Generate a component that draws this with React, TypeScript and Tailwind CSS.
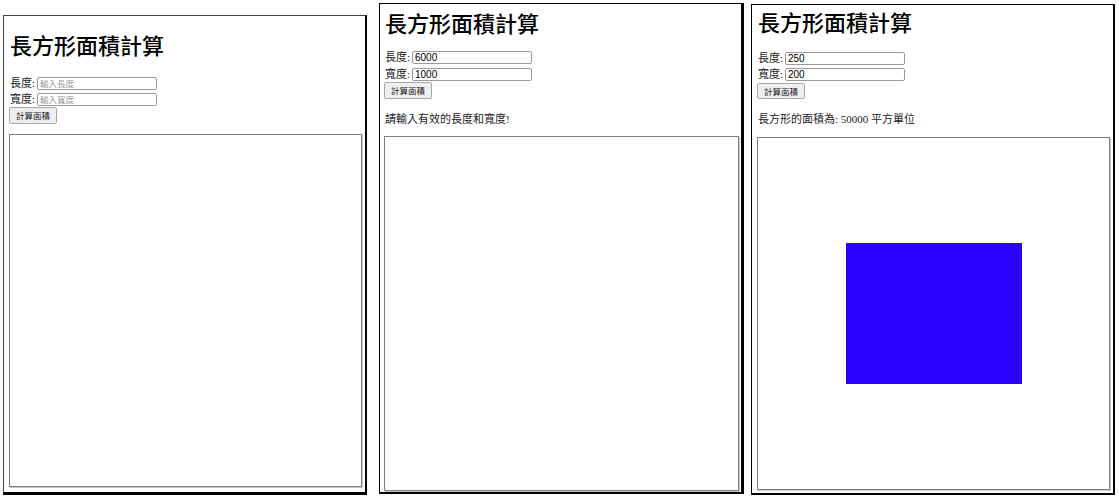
import React from 'react'

const CJK = { fontFamily: '"Noto Sans CJK TC", "Noto Sans CJK JP", sans-serif' }
const BODY = { fontFamily: '"Liberation Serif", "Noto Sans CJK TC", serif' }
const INPUT = { fontFamily: '"Liberation Sans", "Noto Sans CJK TC", sans-serif' }

type Field = { label: string; value?: string; placeholder: string }

function Row({ f, mt }: { f: Field; mt: string }) {
    return (
        <div className={`flex items-center h-[13px] ${mt}`}>
            <span className="w-[28px] pl-[1px] text-[11px] leading-[13px] text-[#222]" style={BODY}>
                {f.label}
            </span>
            <div
                className="w-[120px] h-[13px] border border-[#9a9a9a] rounded-[2px] bg-white flex items-center px-[2px] text-[10px] leading-none text-black"
                style={INPUT}
            >
                {f.value ? f.value : <span className="text-[8.5px] text-[#9a9a9a]" style={CJK}>{f.placeholder}</span>}
            </div>
        </div>
    )
}

function Btn({ mt, h }: { mt: string; h: string }) {
    return (
        <div
            className={`self-start ${mt} ${h} flex items-center px-[6px] border border-[#a8a8a8] rounded-[2px] bg-[#efefef] text-[8.5px] text-[#222]`}
            style={CJK}
        >
            計算面積
        </div>
    )
}

export default function App() {
    return (
        <div className="w-[1119px] h-[499px] bg-white overflow-hidden flex items-start pl-[3px]">
            {/* 畫面 1: 初始狀態 */}
            <div className="mt-[15px] w-[364px] flex flex-col pl-[5px] pr-[3px] pb-[5px] border-t border-l border-[#444] border-r-2 border-r-black border-b-[3px] border-b-black">
                <h1 className="mt-[17px] ml-[1px] text-[22px] leading-[22px] font-medium text-black" style={CJK}>
                    長方形面積計算
                </h1>
                <Row f={{ label: '長度:', placeholder: '輸入長度' }} mt="mt-[22px]" />
                <Row f={{ label: '寬度:', placeholder: '輸入寬度' }} mt="mt-[3px]" />
                <Btn mt="mt-[1px]" h="h-[17px]" />
                <div className="mt-[10px] w-[353px] h-[353px] border border-[#808080] shadow-[1px_1px_0_#c8c8c8]" />
            </div>

            {/* 畫面 2: 錯誤訊息 */}
            <div className="ml-[12px] mt-[3px] w-[365px] flex flex-col pl-[4px] pr-[2px] pb-[1px] border-t border-l border-black border-r-[3px] border-r-black border-b-2 border-b-black">
                <h1 className="mt-[7px] ml-[1px] text-[22px] leading-[22px] font-medium text-black" style={CJK}>
                    長方形面積計算
                </h1>
                <Row f={{ label: '長度:', value: '6000', placeholder: '' }} mt="mt-[18px]" />
                <Row f={{ label: '寬度:', value: '1000', placeholder: '' }} mt="mt-[4px]" />
                <Btn mt="mt-[1px]" h="h-[17px]" />
                <p className="mt-[14px] ml-[1px] text-[11px] leading-[13px] text-[#222]" style={BODY}>
                    請輸入有效的長度和寬度!
                </p>
                <div className="mt-[10px] w-[355px] h-[355px] border border-[#808080] shadow-[1px_1px_0_#c8c8c8]" />
            </div>

            {/* 畫面 3: 計算結果 */}
            <div className="ml-[7px] mt-[4px] w-[364px] flex flex-col pl-[5px] pr-[3px] pb-[3px] border-t border-l border-black border-r-2 border-r-black border-b-2 border-b-black">
                <h1 className="mt-[5px] ml-[1px] text-[22px] leading-[22px] font-medium text-black" style={CJK}>
                    長方形面積計算
                </h1>
                <Row f={{ label: '長度:', value: '250', placeholder: '' }} mt="mt-[20px]" />
                <Row f={{ label: '寬度:', value: '200', placeholder: '' }} mt="mt-[3px]" />
                <Btn mt="mt-[2px]" h="h-[16px]" />
                <p className="mt-[14px] ml-[1px] text-[11px] leading-[13px] text-[#222]" style={BODY}>
                    長方形的面積為: 50000 平方單位
                </p>
                <div className="mt-[11px] w-[353px] h-[353px] border border-[#808080] shadow-[1px_1px_0_#c8c8c8] flex items-center justify-center">
                    <div className="w-[176px] h-[141px] bg-[#2a00ff]" />
                </div>
            </div>
        </div>
    )
}
